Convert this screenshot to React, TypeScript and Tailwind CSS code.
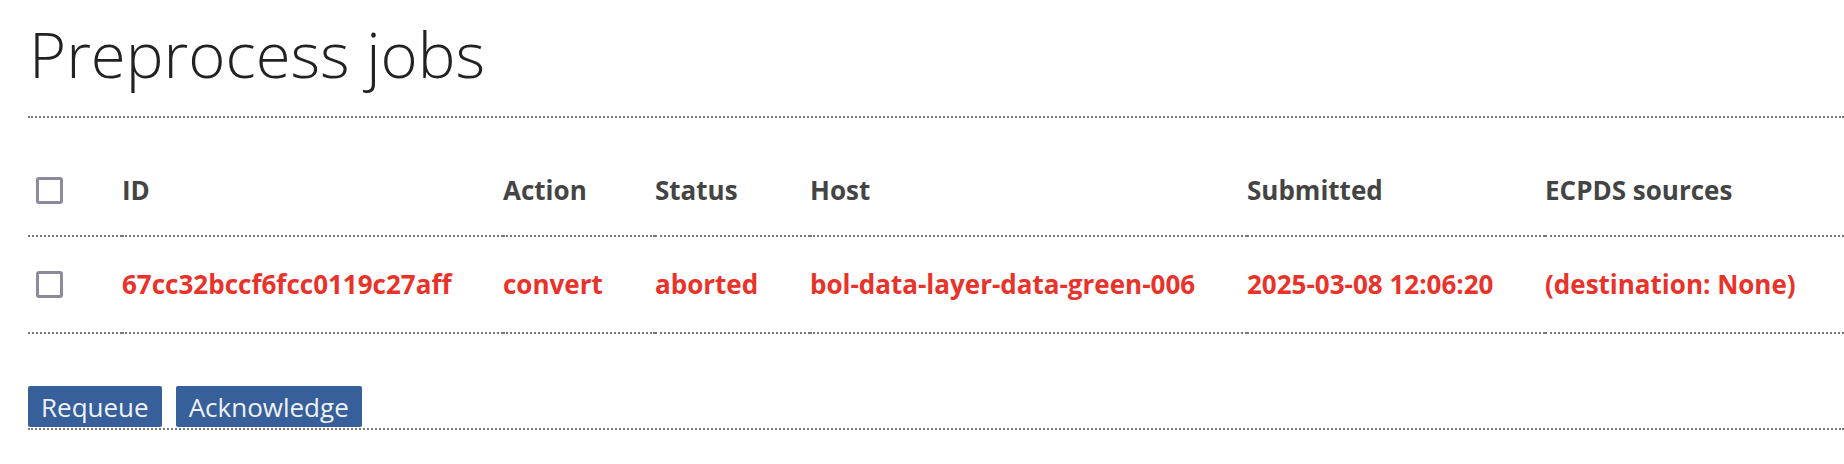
import { useState } from "react";

const jobs = [
  {
    id: "67cc32bccf6fcc0119c27aff",
    action: "convert",
    status: "aborted",
    host: "bol-data-layer-data-green-006",
    submitted: "2025-03-08 12:06:20",
    sources: "(destination: None)",
  },
];

const Box = ({ checked, onChange }: { checked: boolean; onChange: () => void }) => (
  <button
    type="button"
    onClick={onChange}
    className="w-[27px] h-[27px] border-[3px] border-[#8b8b9b] rounded-[3px] bg-white flex items-center justify-center"
  >
    {checked && <span className="w-[13px] h-[13px] bg-[#8b8b9b]" />}
  </button>
);

const App = () => {
  const [picked, setPicked] = useState<string[]>([]);
  const allPicked = picked.length === jobs.length;

  const toggle = (id: string) =>
    setPicked((p) => (p.includes(id) ? p.filter((x) => x !== id) : [...p, id]));

  return (
    <div className="pl-[28px] pt-[16px] bg-white min-h-[464px] font-['Open_Sans',sans-serif]">
      <h1 className="text-[63.5px] font-light leading-[1.2] text-[#222] pb-[24px] border-b-2 border-dotted border-[#777] pl-[1px]">
        Preprocess jobs
      </h1>
      <table className="w-full mt-[21px] border-collapse text-[26px] font-bold">
        <thead>
          <tr className="border-b-2 border-dotted border-[#777] h-[97px] text-[#444] text-left">
            <th className="w-[94px] pl-[8px] pt-[6px] align-middle">
              <Box
                checked={allPicked}
                onChange={() => setPicked(allPicked ? [] : jobs.map((j) => j.id))}
              />
            </th>
            <th className="w-[381px] pt-[6px] font-bold">ID</th>
            <th className="w-[152px] pt-[6px] font-bold">Action</th>
            <th className="w-[155px] pt-[6px] font-bold">Status</th>
            <th className="w-[437px] pt-[6px] font-bold">Host</th>
            <th className="w-[298px] pt-[6px] font-bold">Submitted</th>
            <th className="pt-[6px] font-bold">ECPDS sources</th>
          </tr>
        </thead>
        <tbody>
          {jobs.map((j) => (
            <tr key={j.id} className="border-b-2 border-dotted border-[#777] h-[97px] text-[#e9322a]">
              <td className="pl-[8px] align-middle">
                <Box checked={picked.includes(j.id)} onChange={() => toggle(j.id)} />
              </td>
              <td>{j.id}</td>
              <td>{j.action}</td>
              <td>{j.status}</td>
              <td>{j.host}</td>
              <td>{j.submitted}</td>
              <td>{j.sources}</td>
            </tr>
          ))}
        </tbody>
      </table>
      <div className="mt-[52px] flex gap-[14px] border-b-2 border-dotted border-[#777] pb-[1px]">
        <button className="h-[41px] px-[13px] bg-[#375f99] text-[#eef2f8] text-[26px] leading-none rounded-[2px]">
          Requeue
        </button>
        <button className="h-[41px] px-[13px] bg-[#375f99] text-[#eef2f8] text-[26px] leading-none rounded-[2px]">
          Acknowledge
        </button>
      </div>
    </div>
  );
};

export default App;
